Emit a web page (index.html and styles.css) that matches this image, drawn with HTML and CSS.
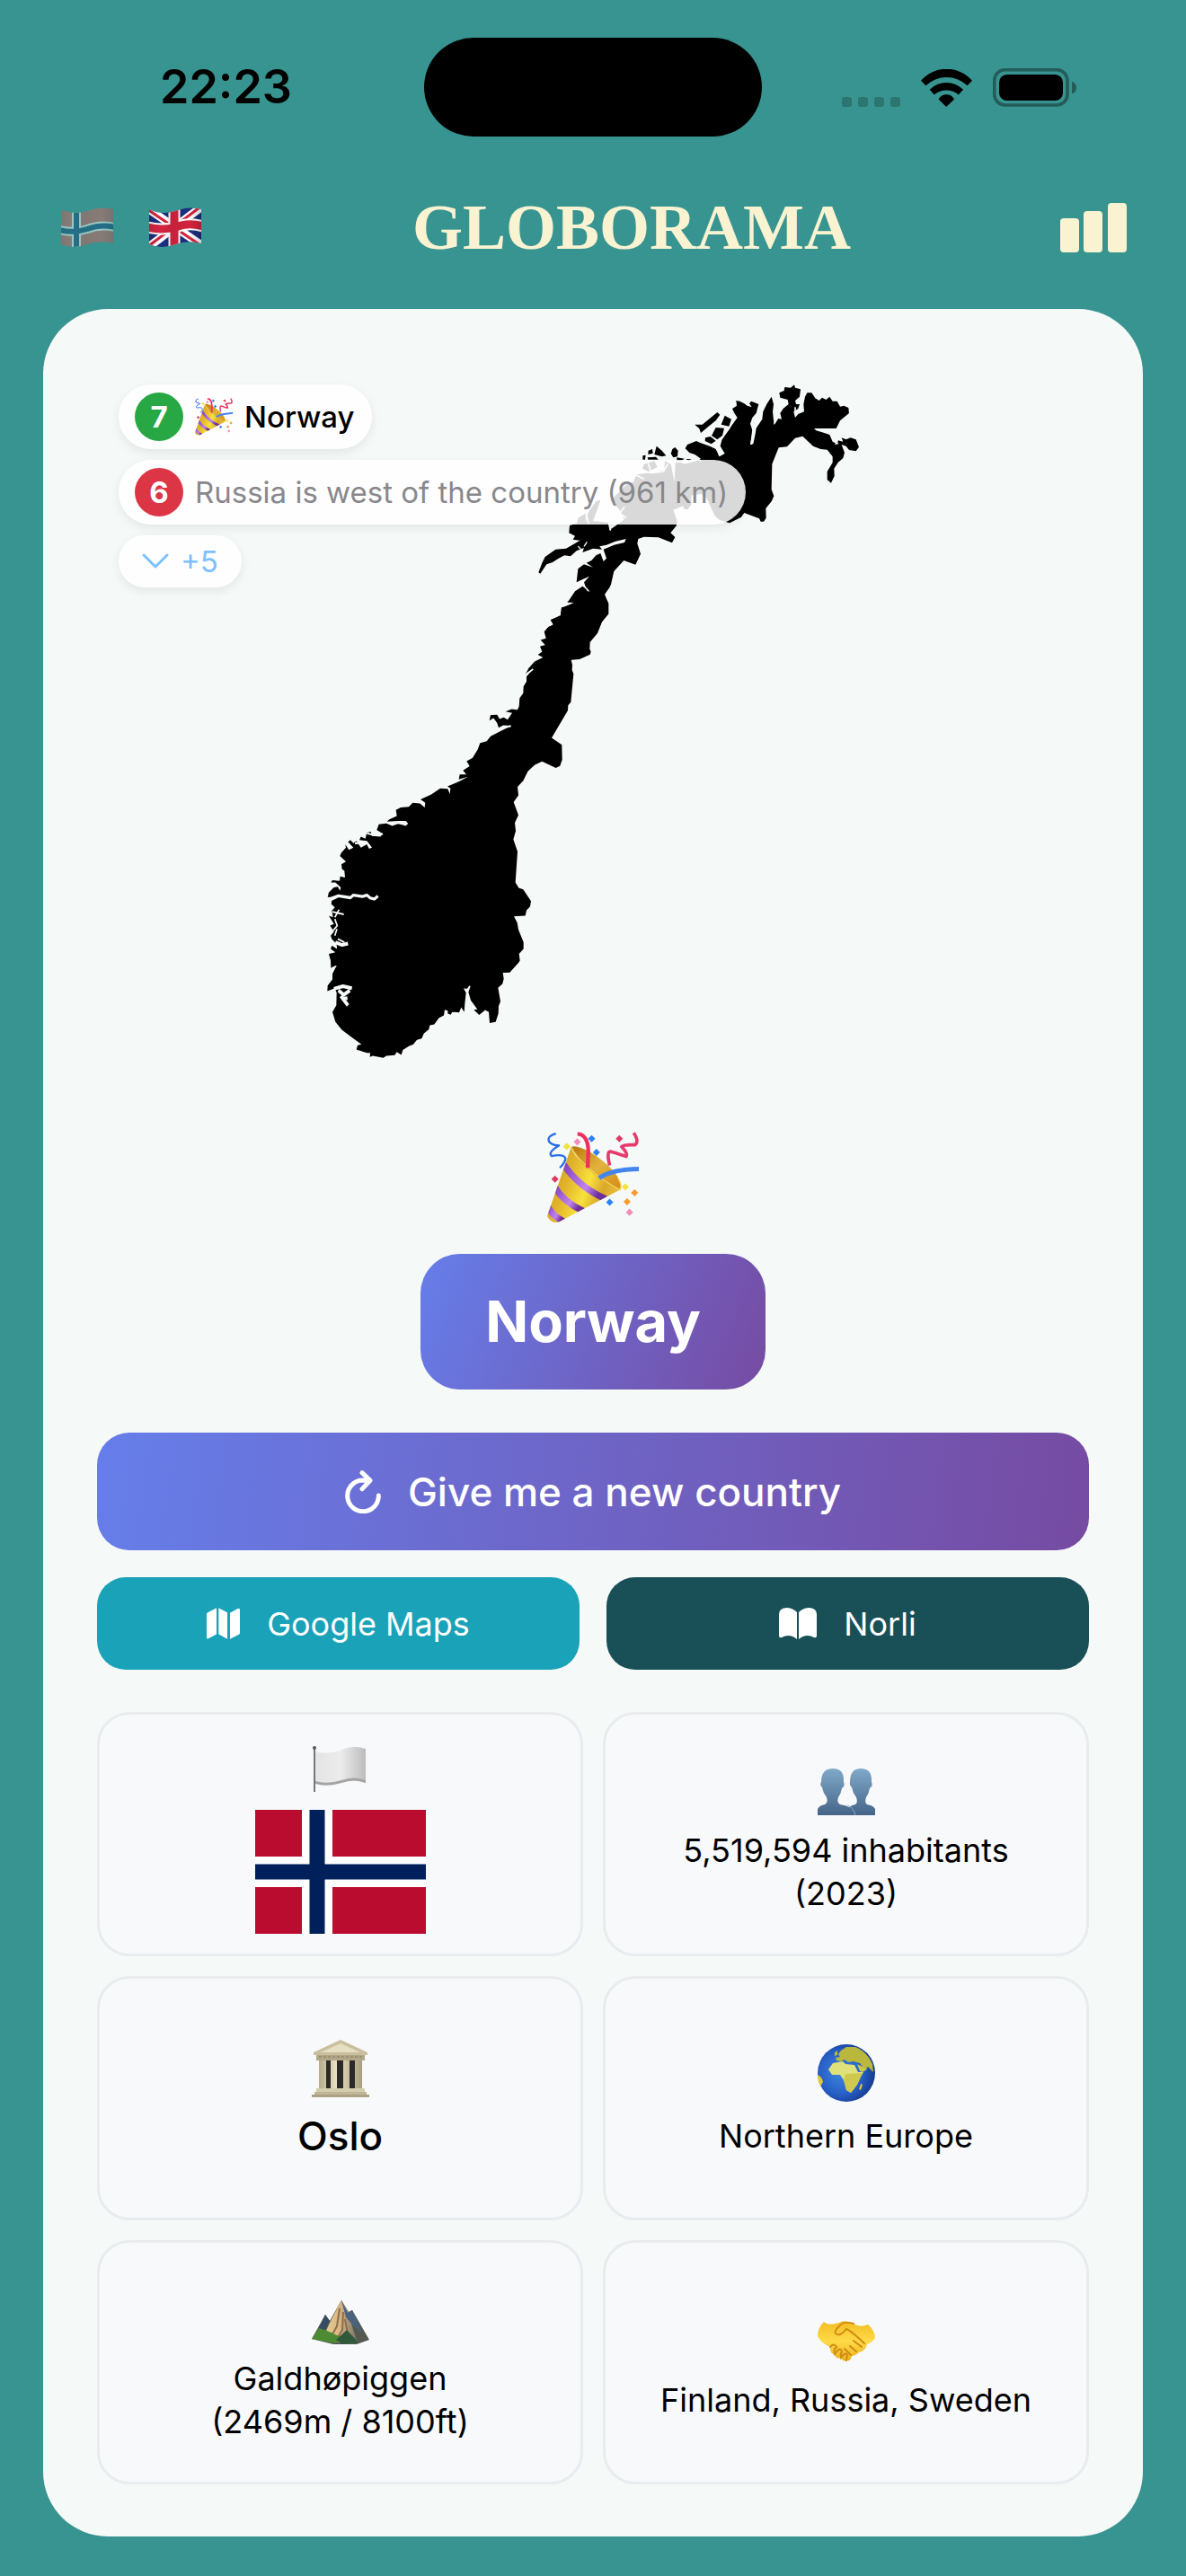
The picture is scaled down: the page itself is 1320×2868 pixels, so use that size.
FILE: index.html
```html
<!DOCTYPE html>
<html lang="en">
<head>
<meta charset="utf-8">
<meta name="viewport" content="width=device-width, initial-scale=1">
<title>Globorama</title>
<link rel="stylesheet" href="styles.css">
</head>
<body>
<svg class="defs" aria-hidden="true">
  <defs>
    <linearGradient id="gold" x1="0" y1="0.3" x2="1" y2="0.7">
      <stop offset="0" stop-color="#c9981c"/><stop offset="0.3" stop-color="#e3b52c"/><stop offset="0.55" stop-color="#f8e23c"/><stop offset="0.75" stop-color="#d9a82b"/><stop offset="1" stop-color="#ecc638"/>
    </linearGradient>
    <linearGradient id="cone-inside" x1="0" y1="0" x2="1" y2="1">
      <stop offset="0" stop-color="#b9780c"/><stop offset="0.5" stop-color="#e2b43c"/><stop offset="1" stop-color="#d68a12"/>
    </linearGradient>
    <linearGradient id="purple" x1="0" y1="0" x2="1" y2="0.5">
      <stop offset="0" stop-color="#8440bd"/><stop offset="0.7" stop-color="#c285ee"/><stop offset="1" stop-color="#70309c"/>
    </linearGradient>
    <clipPath id="cone-clip"><path d="M585 142Q625 215 748 284L545 391Q520 400 505 372Z"/></clipPath>
    <clipPath id="wave"><path d="M2 11Q16 18 31 13Q46 7 60 11V49Q46 45 31 50Q16 56 2 50Z"/></clipPath>
    <linearGradient id="flag-shade" x1="0" y1="0" x2="1" y2="0">
      <stop offset="0" stop-opacity="0.12"/><stop offset="0.25" stop-opacity="0"/><stop offset="0.45" stop-opacity="0.08"/><stop offset="0.75" stop-opacity="0"/><stop offset="1" stop-opacity="0.2"/>
    </linearGradient>
    <linearGradient id="cloth" x1="0" y1="0" x2="1" y2="0">
      <stop offset="0" stop-color="#e4e4e4"/><stop offset="0.5" stop-color="#ececec"/><stop offset="0.8" stop-color="#cfcfcf"/><stop offset="1" stop-color="#bdbdbd"/>
    </linearGradient>
    <linearGradient id="bust" x1="0" y1="0" x2="0" y2="1">
      <stop offset="0" stop-color="#80a9ca"/><stop offset="1" stop-color="#456488"/>
    </linearGradient>
    <linearGradient id="stone" x1="0" y1="0" x2="1" y2="0">
      <stop offset="0" stop-color="#b5ab8c"/><stop offset="0.4" stop-color="#e9e0c4"/><stop offset="1" stop-color="#a89e80"/>
    </linearGradient>
    <radialGradient id="ocean" cx="0.4" cy="0.5" r="0.6">
      <stop offset="0" stop-color="#3b86dc"/><stop offset="0.6" stop-color="#2860c8"/><stop offset="1" stop-color="#153a8e"/>
    </radialGradient>
    <linearGradient id="skin" x1="0" y1="0" x2="0" y2="1">
      <stop offset="0" stop-color="#f3bd20"/><stop offset="0.5" stop-color="#ffda48"/><stop offset="1" stop-color="#edb31f"/>
    </linearGradient>
    <linearGradient id="rock" x1="0" y1="0" x2="1" y2="0">
      <stop offset="0" stop-color="#e3cf95"/><stop offset="0.5" stop-color="#dcb684"/><stop offset="1" stop-color="#7c7468"/>
    </linearGradient>
    <symbol id="party" viewBox="505 91 305 305">
      <path d="M585 142Q600 132 650 160Q735 215 750 265Q751 282 742 285Q640 250 585 142Z" fill="url(#cone-inside)"/>
      <path d="M585 142Q590 168 640 215Q690 262 748 284L545 391Q520 400 505 372Z" fill="url(#gold)"/>
      <g clip-path="url(#cone-clip)" fill="none" stroke="url(#purple)" stroke-width="22">
        <path d="M560 200Q610 275 700 315"/><path d="M530 275Q560 325 625 355"/><path d="M505 335Q520 370 560 390"/>
      </g>
      <path d="M585 142Q598 172 643 212Q690 256 748 284Q755 268 740 245" fill="none" stroke="#f4d254" stroke-width="4"/>
      <path d="M606 98Q642 100 642 160Q640 190 640 211" fill="none" stroke="#f0305c" stroke-width="13"/>
      <path d="M678 245Q720 216 810 215" fill="none" stroke="#4484ee" stroke-width="15"/>
      <path d="M534 97Q502 106 512 125Q524 138 546 136Q505 160 520 172Q560 164 566 180Q564 195 547 211" fill="none" stroke="#2d6fe8" stroke-width="7"/>
      <path d="M713 203Q702 158 715 157Q726 160 768 173Q774 163 753 141Q757 134 797 135Q812 124 793 95" fill="none" stroke="#e83a6c" stroke-width="11"/>
      <path d="M653 102l12 12-12 12-12-12zM669 148l12 12-12 12-12-12zM713 314l12 12-12 12-12-12z" fill="#2d82f5"/>
      <path d="M570 128l12 12-12 12-12-12zM765 263l12 12-12 12-12-12z" fill="#f4e33a"/>
      <path d="M605 113l12 12-12 12-12-12zM779 347l12 12-12 12-12-12z" fill="#f48cba"/>
      <path d="M745 102l12 12-12 12-12-12zM531 237l12 12-12 12-12-12z" fill="#dc3a66"/>
      <path d="M796 282l12 12-12 12-12-12zM771 312l12 12-12 12-12-12z" fill="#f79c32"/>
    </symbol>
  </defs>
</svg>

<div class="status">
  <time class="status-time">22:23</time>
  <div class="island"></div>
  <div class="status-icons">
    <svg class="signal" viewBox="0 0 65 11" aria-hidden="true"><g fill="#2c7571"><rect width="11" height="11" rx="3"/><rect x="18" width="11" height="11" rx="3"/><rect x="36" width="11" height="11" rx="3"/><rect x="54" width="11" height="11" rx="3"/></g></svg>
    <svg class="wifi" viewBox="375 75 172 126" aria-hidden="true"><path d="M375 113A114 114 0 0 1 547 113L531 130A101 101 0 0 0 391 130ZM404 143A80 80 0 0 1 517 143L501 161A61 61 0 0 0 420 161ZM434 176A30 30 0 0 1 487 176L460 201Z"/></svg>
    <svg class="battery" viewBox="615 75 279 129" aria-hidden="true"><rect x="620" y="80" width="244" height="118" rx="36" fill="none" stroke="#235c59" stroke-width="11"/><rect x="636" y="96" width="213" height="87" rx="26"/><path d="M879 119Q894 125 894 140Q894 155 879 160Z" fill="#235c59"/></svg>
  </div>
</div>

<header class="header">
  <div class="languages">
    <button class="icon-button inactive" type="button" aria-label="Norsk">
      <svg class="language-flag" viewBox="0 0 62 62"><g clip-path="url(#wave)"><path fill="#d86460" d="M0 0h62v62H0z"/><path d="M0 34Q16 38 31 33Q46 27 62 31M19 0V62" fill="none" stroke="#fff" stroke-width="10"/><path d="M0 34Q16 38 31 33Q46 27 62 31M19 0V62" fill="none" stroke="#124c80" stroke-width="6"/><path fill="url(#flag-shade)" d="M0 0h62v62H0z"/></g></svg>
    </button>
    <button class="icon-button" type="button" aria-label="English">
      <svg class="language-flag" viewBox="0 0 62 62"><g clip-path="url(#wave)"><path fill="#1c2f80" d="M0 0h62v62H0z"/><path d="M0 10L62 52M0 54L62 7" stroke="#fff" stroke-width="9"/><path d="M0 11L62 53M0 53L62 6" stroke="#d52440" stroke-width="3"/><path d="M0 31Q16 35 31 31Q46 25 62 30M30 0V62" fill="none" stroke="#fff" stroke-width="13"/><path d="M0 31Q16 35 31 31Q46 25 62 30M30 0V62" fill="none" stroke="#d52440" stroke-width="9"/><path fill="url(#flag-shade)" d="M0 0h62v62H0z"/></g></svg>
    </button>
  </div>
  <h1 class="title">GLOBORAMA</h1>
  <button class="icon-button" type="button" aria-label="Statistics">
    <svg class="stats" viewBox="0 0 74 55"><g fill="#faf3d1"><rect y="17" width="21" height="38" rx="4"/><rect x="26" y="9" width="21" height="46" rx="4"/><rect x="53" width="21" height="55" rx="4"/></g></svg>
  </button>
</header>

<main class="panel">
  <svg class="map" viewBox="0 0 3312 2250" role="img" aria-label="Outline of the country">
    <g transform="translate(696 576) scale(1 1.1097)">
      <path d="M1000 105L999 118 1012 140 1012 172 990 195 975 230 950 257 949 278 953 285 950 294 915 308 887 310 891 325 890 340 895 352 886 437 877 447 876 462 822 545 856 566 857 610 850 629 836 635 790 616 766 626 743 645 727 674 708 692 711 718 695 738 711 777 699 800 702 825 694 850 708 887 701 980 712 996 727 1001 753 1036 750 1052 738 1064 734 1080 696 1082 707 1101 711 1122 728 1160 728 1180 713 1195 716 1215 711 1222 682 1251 659 1252 662 1270 658 1285 643 1297 651 1338 645 1352 644 1375 635 1400 615 1403 612 1370 600 1364 580 1379 562 1363 574 1362 552 1335 544 1310 551 1293 547 1290 540 1300 528 1299 536 1312 532 1345 530 1370 520 1356 513 1371 490 1370 485 1378 475 1375 475 1366 465 1363 462 1380 445 1388 430 1407 415 1410 412 1422 395 1435 388 1450 372 1454 360 1467 345 1473 325 1484 320 1499 305 1490 298 1500 270 1502 260 1508 225 1502 215 1505 216 1493 205 1493 170 1483 174 1470 187 1467 160 1450 122 1424 100 1400 90 1370 103 1350 104 1312 98 1298 73 1307 74 1290 90 1272 90 1255 104 1230 85 1240 84 1215 78 1195 100 1190 84 1180 88 1170 105 1180 104 1165 88 1150 84 1140 95 1128 82 1110 95 1105 78 1080 92 1085 88 1065 98 1055 86 1045 88 1035 110 1025 74 1024 78 1010 95 995 108 993 115 1005 118 995 100 980 85 980 90 973 114 975 116 962 132 965 130 945 122 940 120 925 135 917 115 900 120 890 135 875 133 865 145 882 160 875 142 858 150 852 160 862 170 855 185 875 205 865 212 878 222 875 205 855 180 852 185 842 200 848 205 830 218 827 222 840 250 842 258 833 238 822 245 805 270 802 290 810 310 803 335 810 342 802 335 795 310 795 272 797 280 790 305 780 302 762 318 754 345 752 358 740 382 742 398 754 400 740 384 730 420 715 450 697 475 698 482 714 484 697 474 691 515 675 542 662 512 670 515 655 537 655 526 643 548 630 538 615 558 605 575 580 583 560 605 555 618 540 650 525 687 508 660 507 645 514 640 500 628 485 614 493 618 476 640 475 648 488 662 483 675 490 690 470 668 466 688 458 708 460 713 450 715 425 727 410 728 390 738 375 738 360 758 340 735 353 745 335 765 315 793 303 776 295 790 285 783 270 800 265 785 250 803 245 797 225 812 210 828 205 818 190 852 178 855 152 870 150 898 137 872 135Z"/>
      <g fill="none" stroke="#f5f9f8" stroke-width="7" stroke-linejoin="round">
        <path d="M85 1028L110 1020 150 1026 160 1018 190 1022 205 1018 215 1026 230 1030 242 1021" stroke-width="9"/>
        <path d="M100 1160L122 1168 142 1164M95 1300L125 1292 155 1298M110 1305L128 1318 148 1305M118 1322L142 1350M126 1330L140 1328" stroke-width="11"/>
        <path d="M90 1068L128 1076M98 1085L112 1062M98 1090L106 1110 92 1125M105 1120L98 1140M108 1150L130 1160M85 1240L102 1232M645 517L686 509M738 352L760 338" stroke-width="5"/>
        <path d="M165 862L205 860 218 876M205 832L232 838 258 834M300 800L340 803" stroke-width="6"/>
      </g>
    </g>
    <g transform="translate(1416 -84)">
      <path d="M300 752L310 708 343 672 382 686 399 650 388 615 391 600 410 593 458 595 504 613 514 594 499 580 519 555 521 540 508 503 540 490 545 500 556 502 568 485 568 455 600 450 620 465 648 525 665 538 696 547 735 527 745 513 795 532 800 542 810 542 818 530 817 498 836 475 844 457 836 435 838 350 860 295 888 292 915 263 940 257 975 290 1000 300 1022 302 1040 325 1040 345 1022 375 1022 402 1035 413 1046 390 1045 365 1058 345 1075 330 1080 312 1070 285 1085 290 1095 303 1118 307 1128 293 1118 268 1100 262 1085 268 1070 262 1075 275 1055 270 1060 285 1040 275 1030 252 1010 245 985 238 978 231 1052 231 1065 205 1095 180 1093 162 1078 155 1065 158 1055 140 1040 140 1030 125 1018 135 1005 128 995 138 982 130 970 112 955 112 948 125 943 150 945 175 925 183 915 195 910 175 925 165 930 150 918 150 915 138 930 125 933 100 915 95 912 85 900 95 880 93 878 105 862 112 865 128 890 135 893 150 875 165 865 180 870 200 858 198 845 220 842 195 840 175 843 150 836 125 820 150 808 175 805 200 785 230 782 250 775 283 765 285 773 240 765 215 772 195 785 180 793 150 780 145 768 140 762 148 770 160 755 155 745 148 730 140 718 138 720 155 705 165 712 180 722 195 705 218 695 235 680 255 670 270 665 290 680 315 662 325 650 300 630 290 600 280 585 273 555 285 548 298 562 312 580 318 600 332 585 340 545 350 535 345 515 345 512 410 500 350 480 340 478 370 440 380 420 380 385 385 375 410 350 420 330 440 300 470 330 505 345 535 310 560 295 570 290 545 240 540 255 500 265 470 250 475 225 510 215 545 215 515 190 530 186 548 162 555 160 580 180 590 173 602 195 605 205 600 180 615 150 632 115 635 80 660 70 680 58 712 64 716 85 685 105 678 125 665 145 655 165 658 185 640 210 630 205 645 240 632 270 635 262 625 285 620 315 608 350 600 345 612 310 620 275 635 285 665 275 675 265 648 250 655 235 672 218 680 240 695 210 685 190 700 185 745 205 735 228 725 210 745 215 760 232 778 205 758 180 775 155 812 180 812 135 830 132 855 100 870 108 885 85 900 145 950 240 930 260 900 268 880 290 850 290 812 279 785 295 763Z"/>
      <path d="M580 218L605 218 655 177 664 185 650 205 625 225 600 246 595 232ZM680 188L702 200 694 224 668 218ZM650 228L678 230 672 255 655 268 636 255ZM615 262L632 258 650 272 635 283 614 273ZM505 300L514 294 524 305 522 325 508 328 500 315ZM452 290L470 305 484 322 470 325 445 318ZM425 305L438 300 440 314 424 318ZM406 322L416 320 414 335 406 335ZM422 328L450 326 458 335 424 335ZM410 350L445 340 455 360 425 375 405 365ZM520 328L545 332 535 340 520 338ZM550 333L568 334 560 340Z"/>
      <g fill="none" stroke="#f5f9f8" stroke-width="5">
        <path d="M768 285L775 230M845 215L860 190M655 275L662 322M915 160L915 180M1060 262L1050 285M580 325L600 340M300 510L325 530M345 492L330 515 352 530M215 500L225 550M298 545L298 572M380 385L410 400M430 380L475 375 490 350M418 330L435 380"/>
        <path d="M190 625L205 640M220 610L210 625M200 745L225 775" stroke-width="4"/>
      </g>
    </g>
  </svg>

  <ol class="history">
    <li class="guess"><span class="badge correct">7</span><svg class="guess-party" aria-hidden="true"><use href="#party"/></svg><span class="guess-name">Norway</span></li>
    <li class="guess"><span class="badge wrong">6</span><span class="hint">Russia is west of the country (961 km)</span></li>
    <li><button class="more" type="button"><svg class="chevron" viewBox="0 0 30 18" aria-hidden="true"><path d="M2 2L15 15L28 2" fill="none" stroke="#7cc0ff" stroke-width="3" stroke-linecap="round" stroke-linejoin="round"/></svg>+5</button></li>
  </ol>

  <section class="result">
    <svg class="party" aria-hidden="true"><use href="#party"/></svg>
    <h2 class="answer">Norway</h2>
  </section>

  <div class="actions">
    <button class="action primary" type="button">
      <svg class="icon-reload" viewBox="525 78 120 144" aria-hidden="true"><g fill="none" stroke="#fff" stroke-width="15" stroke-linecap="round" stroke-linejoin="round"><path d="M637 162A52 52 0 1 1 585 111L608 112"/><path d="M582 86L609 112L582 140"/></g></svg>
      Give me a new country
    </button>
    <a class="action maps" href="#maps">
      <svg class="icon-map" viewBox="66 541 111 104" aria-hidden="true"><path d="M66 562Q66 558 70 556L99 541V629L72 643Q66 646 66 640ZM106 541L135 556V645L106 629ZM144 558L171 543Q177 541 177 547V624Q177 628 174 630L144 645Z" fill="#fff"/></svg>
      Google Maps
    </a>
    <a class="action norli" href="#norli">
      <svg class="icon-book" viewBox="0 0 42 35" aria-hidden="true"><path d="M20 35V5Q15 0 8 0Q0 1 0 7V31Q0 34 3 33Q12 28 20 35ZM22 35V5Q27 0 34 0Q42 1 42 7V31Q42 34 39 33Q30 28 22 35Z" fill="#fff"/></svg>
      Norli
    </a>
  </div>

  <section class="facts">
    <article class="fact">
      <svg class="fact-icon" viewBox="0 0 64 64" aria-hidden="true"><path d="M3 10V58" stroke="#777" stroke-width="2"/><circle cx="3" cy="9" r="2" fill="#555"/><path d="M4 13Q16 17 31 12Q46 5 60 10V48Q47 43 33 48Q17 53 4 49Z" fill="url(#cloth)"/><path d="M4 49Q17 53 33 48Q47 43 60 48V45Q47 40 33 45Q17 50 4 46Z" fill="#a4a4a4"/></svg>
      <svg class="country-flag" viewBox="0 0 190 138" role="img" aria-label="Flag of Norway"><path fill="#ba0c2f" d="M0 0h190v138H0z"/><path d="M69 0V138M0 69H190" stroke="#fff" stroke-width="34"/><path d="M69 0V138M0 69H190" stroke="#00205b" stroke-width="17"/></svg>
    </article>
    <article class="fact">
      <svg class="fact-icon" viewBox="0 0 64 64" aria-hidden="true"><path d="M34 63V56Q36 52 42 51Q45 49 43 43Q39 38 38 32Q35 29 36 26Q36 11 48 11Q61 11 60 26Q62 30 58 33Q57 39 54 43Q52 49 55 51Q62 52 64 56V63ZM0 63V56Q2 52 8 51Q12 49 10 43Q6 38 5 32Q2 29 4 26Q4 11 17 11Q30 11 29 26Q31 30 27 33Q26 39 23 43Q21 49 25 51Q38 52 42 63Z" fill="url(#bust)"/><path d="M33 52Q40 54 42 63" stroke="#86aed0" fill="none"/></svg>
      <p class="fact-text">5,519,594 inhabitants<br>(2023)</p>
    </article>
    <article class="fact">
      <svg class="fact-icon" viewBox="0 0 64 64" aria-hidden="true"><path d="M9 20h46v36H9z" fill="#2d2a26"/><path d="M32 0L62 14V17H2V14Z" fill="#c9bf9f"/><path d="M32 4L54 14H10Z" fill="#e7dfc2"/><path d="M5 17H59V23H5Z" fill="#b2a888"/><path d="M8 19h48" stroke="#837a62" stroke-dasharray="3 2"/><g fill="url(#stone)"><path d="M8 23h8v32H8zM21 23h7v32h-7zM35 23h7v32h-7zM48 23h8v32h-8z"/></g><path d="M5 54h54v4H5z" fill="#d5ccad"/><path d="M3 58h58v3H3z" fill="#c0b696"/><path d="M0 61h64v3H0z" fill="#aca182"/></svg>
      <p class="fact-text capital">Oslo</p>
    </article>
    <article class="fact">
      <svg class="fact-icon" viewBox="0 0 64 64" aria-hidden="true"><circle cx="32" cy="32" r="32" fill="url(#ocean)"/><path d="M26 7L32 3 42 3Q56 9 61 22L62 31 56 25 53 29 47 21 43 20 40 19 34 20 30 17 26 19 21 18 20 15 25 14 23 11ZM19 9L22 7 22 12 19 13Z" fill="#b9b83c"/><path d="M17 21L28 19 31 22 41 23 45 31 51 31 47 38 44 45 37 54 32 51 29 40 25 34 16 34 12 28Z" fill="#dfe27a"/><path d="M31 33L50 32 44 45 37 54 32 51 29 40Z" fill="#cfc84e"/><path d="M44 22L50 25 55 28 50 31 47 30Z" fill="#c9c64e"/><path d="M48 44l2 1-2 6-2-1zM0 34Q5 36 6 42L3 47Q0 41 0 34Z" fill="#dfc636"/></svg>
      <p class="fact-text">Northern Europe</p>
    </article>
    <article class="fact">
      <svg class="fact-icon" viewBox="0 0 64 64" aria-hidden="true"><path d="M0 58L15 31L20 38L33 15L41 28L45 26L64 59L50 64H24Z" fill="#545a50"/><path d="M33 15L20 40L12 58L30 62L50 60L45 44L41 29Z" fill="url(#rock)"/><path d="M33 15L40 29L45 26L56 51L47 44L38 34Z" fill="#4c6380"/><path d="M31 24L28 44L20 58M35 28L34 48L27 60M37 36L40 52" stroke="#8a704c" stroke-width="2" fill="none"/><path d="M15 31L20 38L14 50L6 50Z" fill="#364c62"/><path d="M0 58L8 46L17 49L28 54L37 58L26 63Z" fill="#4d8a34"/><path d="M39 48L52 62L34 64L27 59Z" fill="#2f5a3a"/></svg>
      <p class="fact-text">Galdhøpiggen<br>(2469m / 8100ft)</p>
    </article>
    <article class="fact">
      <svg class="fact-icon" viewBox="0 0 64 64" aria-hidden="true"><path d="M7 15Q12 20 24 16Q30 12 40 17Q47 22 56 18Q64 25 64 33Q61 38 55 40Q54 47 46 49Q42 53 38 53Q37 59 33 58Q28 60 26 55Q20 57 19 51Q13 50 14 43Q4 39 0 31Q0 22 7 15Z" fill="url(#skin)"/><path d="M40 17Q29 14 25 19Q18 25 20 28Q25 32 32 23Q36 24 52 39M40 36L49 43M36 42L43 48M30 45L37 52M14 43Q18 38 21 43Q17 46 19 51Q25 42 27 48Q25 51 26 55Q31 48 33 52L32 58" fill="none" stroke="#cf8c12" stroke-width="2" stroke-linecap="round"/></svg>
      <p class="fact-text">Finland, Russia, Sweden</p>
    </article>
  </section>
</main>
</body>
</html>
```
FILE: styles.css
```css
* {
  box-sizing: border-box;
}

body {
  margin: 0;
  padding-bottom: 44px;
  background: #389490;
  color: #000;
  font-family: Inter, "Liberation Sans", sans-serif;
  font-size: 36px;
  line-height: 48px;
}

h1, h2, p, ol {
  margin: 0;
  padding: 0;
}

svg {
  display: block;
  flex: none;
}

button {
  border: 0;
  font: inherit;
  cursor: pointer;
}

.defs {
  position: absolute;
  width: 0;
  height: 0;
}

/* Status bar */
.status {
  display: grid;
  grid-template-columns: 1fr 376px 1fr;
  align-items: center;
  padding-top: 42px;
}

.status-time {
  padding-left: 178px;
  font-size: 52px;
  font-weight: 600;
}

.island {
  height: 110px;
  border-radius: 55px;
  background: #000;
}

.status-icons {
  display: flex;
  justify-content: flex-end;
  align-items: flex-end;
  gap: 23px;
  padding-right: 122px;
}

.signal {
  width: 65px;
  height: 11px;
}

.wifi {
  width: 57px;
  height: 42px;
}

.battery {
  width: 93px;
  height: 43px;
}

/* Header */
.header {
  display: flex;
  justify-content: space-between;
  align-items: center;
  height: 192px;
  padding: 10px 66px 0;
}

.languages {
  display: flex;
  gap: 36px;
}

.icon-button {
  padding: 0;
  background: none;
}

.inactive {
  opacity: 0.5;
}

.language-flag {
  width: 62px;
  height: 62px;
}

.title {
  color: #faf3d1;
  font-family: "Liberation Serif", serif;
  font-size: 72px;
  font-weight: 700;
  line-height: 84px;
}

.stats {
  width: 74px;
  height: 55px;
}

/* Main panel */
.panel {
  position: relative;
  margin: 0 48px;
  padding: 84px 60px 58px;
  border-radius: 72px;
  background: #f5f9f8;
}

.map {
  width: 100%;
  height: 750px;
}

.history {
  position: absolute;
  top: 84px;
  left: 84px;
  display: flex;
  flex-direction: column;
  align-items: flex-start;
  gap: 12px;
  list-style: none;
  font-size: 33px;
}

.guess {
  display: flex;
  align-items: center;
  gap: 13px;
  height: 72px;
  padding: 0 20px 0 18px;
}

.guess,
.more {
  border-radius: 36px;
  background: rgba(255, 255, 255, 0.85);
  box-shadow: 0 4px 12px rgba(0, 0, 0, 0.08);
}

.badge {
  width: 54px;
  height: 54px;
  border-radius: 50%;
  color: #fff;
  font-weight: 700;
  line-height: 54px;
  text-align: center;
}

.correct {
  background: #28a745;
}

.wrong {
  background: #dc3545;
}

.guess-party {
  width: 42px;
  height: 42px;
}

.guess-name {
  font-weight: 500;
}

.hint {
  color: #88888c;
}

.more {
  display: flex;
  align-items: center;
  gap: 13px;
  height: 58px;
  padding: 0 26px;
  color: #7cc0ff;
}

.chevron {
  width: 30px;
  height: 18px;
}

/* Result */
.result {
  display: flex;
  flex-direction: column;
  align-items: center;
  gap: 34px;
  padding: 82px 0 48px;
}

.party {
  width: 102px;
  height: 102px;
}

.answer {
  padding: 36px 72px;
  border-radius: 44px;
  background: linear-gradient(112deg, #667eea, #764ba2);
  color: #fff;
  font-size: 63px;
  font-weight: 700;
  line-height: 79px;
}

/* Actions */
.actions {
  display: grid;
  grid-template-columns: 1fr 1fr;
  gap: 30px;
  margin-bottom: 47px;
}

.action {
  display: flex;
  justify-content: center;
  align-items: center;
  gap: 30px;
  height: 103px;
  border-radius: 32px;
  color: #fff;
  text-decoration: none;
}

.primary {
  grid-column: 1 / -1;
  height: 131px;
  border-radius: 36px;
  background: linear-gradient(97deg, #667eea, #764ba2);
  font-size: 44px;
  font-weight: 500;
}

.maps {
  background: #19a2b8;
}

.norli {
  background: #195058;
}

.icon-reload {
  width: 40px;
  height: 48px;
}

.icon-map {
  width: 37px;
  height: 35px;
}

.icon-book {
  width: 42px;
  height: 35px;
}

/* Facts */
.facts {
  display: grid;
  grid-template-columns: 1fr 1fr;
  grid-auto-rows: minmax(272px, auto);
  gap: 22px;
}

.fact {
  display: flex;
  flex-direction: column;
  justify-content: center;
  align-items: center;
  border: 3px solid #e9ecee;
  border-radius: 36px;
  background: #f8f9fb;
  text-align: center;
}

.fact-icon {
  width: 64px;
  height: 64px;
  margin: 6px 0 14px;
}

.country-flag {
  width: 190px;
  height: 138px;
}

.capital {
  font-size: 44px;
  font-weight: 500;
  line-height: 58px;
}
```
